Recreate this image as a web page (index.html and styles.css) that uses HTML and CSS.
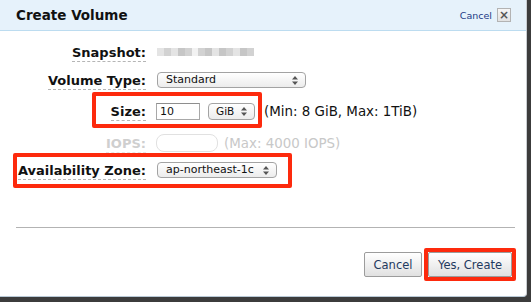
FILE: index.html
```html
<!DOCTYPE html>
<html>
<head>
  <meta charset="utf-8">
  <title>Create Volume</title>
  <link rel="stylesheet" href="styles.css">
</head>
<body>
  <div class="dialog">
    <div class="dialog-header">
      <h1>Create Volume</h1>
      <div class="close">
        <span class="close-link">Cancel</span>
        <span class="close-box">&times;</span>
      </div>
    </div>

    <div class="form">
      <div class="label"><span>Snapshot:</span></div>
      <div class="field">
        <span class="blur">
          <i class="b1"></i><i class="b2"></i><i class="b1"></i><i class="b3"></i><i class="b2"></i>
          <i class="gap"></i>
          <i class="b2"></i><i class="b3"></i><i class="b1"></i><i class="b3"></i><i class="b2"></i><i class="b1"></i><i class="b3"></i><i class="b2"></i>
        </span>
      </div>

      <div class="label"><span>Volume Type:</span></div>
      <div class="field">
        <span class="select select-type">Standard
          <svg class="arrows" width="6" height="9" viewBox="0 0 6 9"><path d="M3 0L6 3.5H0Z M3 9L6 5.5H0Z" fill="#555"/></svg>
        </span>
      </div>

      <div class="label"><span>Size:</span></div>
      <div class="field">
        <span class="input input-size">10</span>
        <span class="select select-unit">GiB
          <svg class="arrows" width="6" height="9" viewBox="0 0 6 9"><path d="M3 0L6 3.5H0Z M3 9L6 5.5H0Z" fill="#555"/></svg>
        </span>
        <span class="hint">(Min: 8 GiB, Max: 1TiB)</span>
      </div>

      <div class="label disabled"><span>IOPS:</span></div>
      <div class="field">
        <span class="input input-iops"></span>
        <span class="hint disabled">(Max: 4000 IOPS)</span>
      </div>

      <div class="label"><span>Availability Zone:</span></div>
      <div class="field">
        <span class="select select-zone">ap-northeast-1c
          <svg class="arrows" width="6" height="9" viewBox="0 0 6 9"><path d="M3 0L6 3.5H0Z M3 9L6 5.5H0Z" fill="#555"/></svg>
        </span>
      </div>
    </div>

    <div class="divider"></div>

    <div class="footer">
      <button class="btn">Cancel</button>
      <button class="btn btn-create">Yes, Create</button>
    </div>

    <!-- annotations -->
    <div class="mark mark-size"></div>
    <div class="mark mark-zone"></div>
    <div class="mark mark-create"></div>
  </div>
</body>
</html>
```

FILE: styles.css
```css
body {
  margin: 0;
  background: #3c3c3c;
  font-family: "DejaVu Sans", Verdana, sans-serif;
  height: 302px;
  overflow: hidden;
}

.dialog {
  position: relative;
  width: 526px;
  height: 296px;
  background: #fff;
  border-right: 1px solid #c9cdd1;
  border-bottom: 1px solid #b9c9d6;
  border-bottom-right-radius: 4px;
}

/* header */
.dialog-header {
  height: 30px;
  background: #e6f2fb;
  border-bottom: 1px solid #bcdcf0;
  display: flex;
  justify-content: space-between;
  align-items: center;
  padding: 0 15px 0 16px;
}

.dialog-header h1 {
  margin: 0;
  font-size: 13.5px;
  font-weight: bold;
  color: #111;
}

.close {
  display: flex;
  align-items: center;
}

.close-link {
  font-size: 9.5px;
  color: #1b3a86;
}

.close-box {
  margin-left: 5px;
  width: 12px;
  height: 12px;
  border: 1px solid #b3b3b3;
  background: linear-gradient(#f6f6f6, #e2e2e2);
  color: #555;
  font-size: 12px;
  line-height: 12px;
  text-align: center;
  font-weight: bold;
}

/* form */
.form {
  margin-top: 7px;
  display: grid;
  grid-template-columns: 146px 1fr;
  grid-template-rows: 28px 28px 34px 30px 24px;
  column-gap: 10px;
  align-items: center;
}

.label {
  text-align: right;
  font-size: 13px;
  font-weight: bold;
  color: #111;
}

.label span {
  border-bottom: 1px dashed #b5b5b5;
  padding-bottom: 1px;
}

.label.disabled {
  color: #cfcfcf;
}

.label.disabled span {
  border-bottom-color: #e6e6e6;
}

.field {
  display: flex;
  align-items: center;
}

.blur {
  display: flex;
  margin-left: 1px;
  height: 8px;
}

.blur i {
  width: 7px;
  height: 8px;
}

.blur .b1 { background: #e4e4e4; }
.blur .b2 { background: #d2d2d2; }
.blur .b3 { background: #c6c6c6; }
.blur .gap { width: 6px; background: #f2f2f2; }

.select {
  position: relative;
  box-sizing: border-box;
  height: 16px;
  margin-left: 1px;
  padding-left: 8px;
  border: 1px solid #a3a3a3;
  border-radius: 4px;
  background: linear-gradient(#ffffff, #ececec);
  font-size: 11px;
  line-height: 14px;
  color: #111;
}

.select .arrows {
  position: absolute;
  right: 7px;
  top: 3px;
}

.select-type { width: 149px; }
.select-zone { width: 120px; }

.select-unit {
  width: 47px;
  height: 17px;
  margin-left: 8px;
  padding-left: 7px;
  line-height: 15px;
  font-size: 10.5px;
}

.input {
  box-sizing: border-box;
  border: 1px solid #a8a8a8;
  border-top-color: #8e8e8e;
  font-size: 11px;
  line-height: 15px;
  padding-left: 3px;
  color: #111;
}

.input-size {
  width: 44px;
  height: 17px;
}

.input-iops {
  width: 62px;
  height: 18px;
  border: 1px solid #e1e1e1;
  border-radius: 8px;
}

.hint {
  margin-left: 9px;
  font-size: 13.4px;
  color: #111;
}

.hint.disabled {
  margin-left: 6px;
  color: #c8c8c8;
}

/* footer */
.divider {
  margin: 45px 11px 0 16px;
  border-top: 1px solid #b3b3b3;
}

.footer {
  display: flex;
  justify-content: flex-end;
  gap: 6px;
  padding: 24px 14px 0 0;
}

.btn {
  height: 25px;
  padding: 0;
  border: 1px solid #9c9c9c;
  border-radius: 2px;
  background: linear-gradient(#ffffff, #e1e1e1);
  font-family: "DejaVu Sans", Verdana, sans-serif;
  font-size: 11.5px;
  color: #1f3a5f;
}

.btn { width: 58px; }
.btn-create { width: 84px; }

/* red annotation boxes */
.mark {
  position: absolute;
  box-sizing: border-box;
  border: 4px solid #fd2a0d;
  border-radius: 2px;
}

.mark-size {
  left: 92px;
  top: 92px;
  width: 170px;
  height: 36px;
}

.mark-zone {
  left: 13px;
  top: 153px;
  width: 279px;
  height: 35px;
}

.mark-create {
  left: 424px;
  top: 248px;
  width: 92px;
  height: 33px;
}
```
